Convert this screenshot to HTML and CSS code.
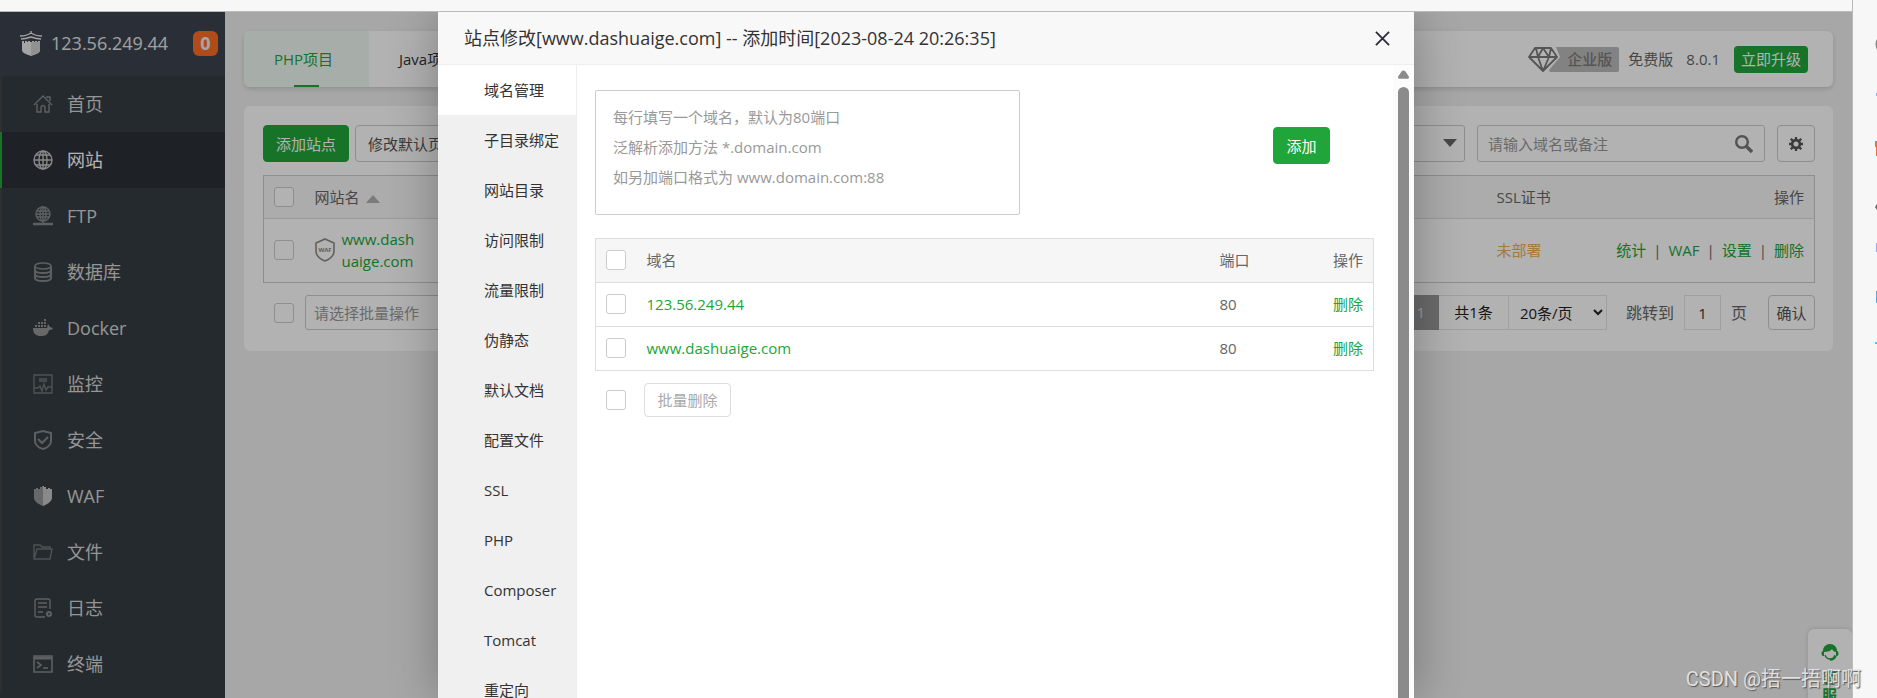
FILE: index.html
```html
<!DOCTYPE html>
<html lang="zh-CN">
<head>
<meta charset="utf-8">
<title>网站</title>
<link rel="stylesheet" href="styles.css">
</head>
<body>
<div class="browser">
  <div class="viewport">
    <div class="app">
      <aside class="sidebar">
        <div class="brand">
          <svg class="brand-logo" viewBox="0 0 24 26" aria-hidden="true"><path d="M3 11h2v2h1v-2h2v1h1v-1h2v1h2v-1h2v1h1v-1h2v2h1v-2h2v9c0 3-4 4-9 6-5-2-9-3-9-6z" fill="#ebebeb"/><path d="M12 12v14c5-2 9-3 9-6v-8z" fill="#d0d0d0"/><path d="M12 1v2M12 3C9 5 5 6 1 6M12 3c3 2 7 3 11 3M12 7C9 8 5 9 2 9M12 7c3 1 7 2 10 2" fill="none" stroke="#ebebeb" stroke-width="1.4"/></svg>
          <span class="brand-ip">123.56.249.44</span>
          <span class="brand-badge">0</span>
        </div>
        <nav class="menu">
          <a class="menu-item" href="#"><svg viewBox="0 0 20 20"><path d="M1 11l9-9 9 9M4 10v8h4v-5q2-3 4 0v5h4v-8M14 4V3h3v4"/></svg>首页</a>
          <a class="menu-item active" href="#"><svg viewBox="0 0 20 20"><circle cx="10" cy="10" r="9"/><ellipse cx="10" cy="10" rx="4" ry="9"/><path d="M10 1v18M1 10h18M3 5h14M3 15h14"/></svg>网站</a>
          <a class="menu-item" href="#"><svg viewBox="0 0 20 20"><circle cx="10" cy="8" r="7"/><ellipse cx="10" cy="8" rx="3" ry="7"/><path d="M3 8h14M4 5h12M4 11h12M10 1v16"/><path d="M0 18h20M7 18h6" stroke-width="2.4"/></svg>FTP</a>
          <a class="menu-item" href="#"><svg viewBox="0 0 20 20"><ellipse cx="10" cy="4" rx="8" ry="3"/><path d="M2 4v12c0 4 16 4 16 0V4M2 8c0 4 16 4 16 0M2 12c0 4 16 4 16 0" stroke-width="2"/></svg>数据库</a>
          <a class="menu-item" href="#"><svg viewBox="0 0 20 20" class="solid"><path d="M0 10h14c1-1 0-3 1-4l2 3 3 1c-1 2-3 2-4 2-1 5-4 6-8 6-5 0-8-2-8-8zM2 7h2v2H2zM5 7h2v2H5zM8 7h2v2H8zM11 7h2v2h-2zM5 4h2v2H5zM8 4h2v2H8zM11 4h2v2h-2zM11 1h2v2h-2z"/></svg>Docker</a>
          <a class="menu-item" href="#"><svg viewBox="0 0 20 20" class="faint"><path d="M1 1h18v18H1zM1 14h4l2-2 2 5 2-7 2 6 2-3h4M6 5h8M6 7h8"/></svg>监控</a>
          <a class="menu-item" href="#"><svg viewBox="0 0 20 20"><path d="M10 1l8 2v8c0 4-4 7-8 8-4-1-8-4-8-8V3zM5 9l4 4 6-6" stroke-width="2"/></svg>安全</a>
          <a class="menu-item" href="#"><svg viewBox="0 0 20 20" class="solid"><path d="M10 0v20c-5-2-9-5-9-8V3h2V2h2v1h2V1h2V0z"/><path class="bright" d="M10 0v20c5-2 9-5 9-8V3h-2V2h-2v1h-2V1h-2V0z"/></svg>WAF</a>
          <a class="menu-item" href="#"><svg viewBox="0 0 20 20" class="faint"><path d="M1 17V3h6l2 2h8v2M1 17L4 7h15l-2 10z"/></svg>文件</a>
          <a class="menu-item" href="#"><svg viewBox="0 0 20 20"><path d="M12 19H4q-2 0-2-2V3q0-2 2-2h11q2 0 2 2v8M5 5h9M5 9h9M5 14h5"/><circle cx="16" cy="16" r="2" stroke-width="2"/></svg>日志</a>
          <a class="menu-item" href="#"><svg viewBox="0 0 20 20"><path d="M1 2h18v16H1zM4 8l4 3-4 3M10 14h5" stroke-width="1.6"/><path d="M1 4h18" stroke-width="3"/></svg>终端</a>
        </nav>
      </aside>

      <main class="main">
        <section class="card tabs-card">
          <a class="tab current" href="#">PHP项目</a>
          <a class="tab" href="#">Java项目</a>
          <div class="license">
            <span class="edition">
              <svg class="gem" viewBox="0 0 34 25" aria-hidden="true"><path d="M28 0h6v25H22l-1-2 11-13z" fill="#bbb"/><path d="M7 1h16l6 9-14 14L1 10zM1 10h28M8 1l2 9 5 14 6-14 2-9M10 10l5-9 6 9" fill="none" stroke="#7a7a7a" stroke-width="1.8" stroke-linejoin="round"/></svg>
              <span class="edition-name">企业版</span>
            </span>
            <span>免费版</span>
            <span class="version">8.0.1</span>
            <button class="upgrade" type="button">立即升级</button>
          </div>
        </section>

        <section class="card sites">
          <div class="toolbar">
            <button class="btn primary" type="button">添加站点</button>
            <button class="btn" type="button">修改默认页</button>
            <div class="toolbar-right">
              <div class="category"><select aria-label="分类"><option></option></select><svg viewBox="0 0 14 8" aria-hidden="true"><path d="M0 0h14L7 8z"/></svg></div>
              <div class="search">
                <input type="text" placeholder="请输入域名或备注" aria-label="请输入域名或备注">
                <svg viewBox="0 0 18 18" aria-hidden="true"><circle cx="7" cy="7" r="5.8"/><path d="M11 11l6 6" stroke-width="3.4"/></svg>
              </div>
              <button class="btn gear" type="button" aria-label="设置"><svg viewBox="0 0 16 16"><circle cx="8" cy="8" r="4.4" fill="none" stroke="#555" stroke-width="3"/><path d="M8 0v3M8 13v3M0 8h3M13 8h3M2 2l3 3M11 11l3 3M14 2l-3 3M5 11l-3 3" stroke="#555" stroke-width="2.6"/></svg></button>
            </div>
          </div>

          <table class="grid site-grid">
            <colgroup><col class="c-check"><col class="c-name"><col><col class="c-ssl"><col class="c-ops"></colgroup>
            <thead>
              <tr><th><input type="checkbox" aria-label="全选"></th><th>网站名 <svg class="sort" viewBox="0 0 14 8" aria-hidden="true"><path d="M0 8h14L7 0z"/></svg></th><th></th><th>SSL证书</th><th class="right">操作</th></tr>
            </thead>
            <tbody>
              <tr>
                <td><input type="checkbox" aria-label="www.dashuaige.com"></td>
                <td><div class="site"><svg viewBox="0 0 20 24" aria-hidden="true"><path d="M10 1l9 4v8c0 5-4 8-9 10-5-2-9-5-9-10V5z" fill="none" stroke="#8a8a8a" stroke-width="1.6"/><text x="10" y="14" text-anchor="middle">WAF</text></svg><a href="#">www.dashuaige.com</a></div></td>
                <td></td>
                <td class="warn">未部署</td>
                <td class="right ops"><a href="#">统计</a><i>|</i><a href="#">WAF</a><i>|</i><a href="#">设置</a><i>|</i><a href="#">删除</a></td>
              </tr>
            </tbody>
          </table>

          <div class="footer">
            <input type="checkbox" aria-label="选择全部">
            <select class="batch" aria-label="批量操作"><option>请选择批量操作</option></select>
            <div class="pager">
              <span class="page-now">1</span><span class="page-total">共1条</span><select class="page-size" aria-label="每页条数"><option>20条/页</option></select>
              <label for="jump">跳转到</label><input id="jump" class="page-jump" type="text" value="1"><span class="page-unit">页</span>
              <button class="btn confirm" type="button">确认</button>
            </div>
          </div>
        </section>
      </main>
      <div class="service">
        <svg viewBox="0 0 18 17" aria-hidden="true"><path d="M2 7C2 3 5 0 9 0s7 3 7 7c2 0 2 5 0 5h-1V8c-2 0-3-1-4-3-1 2-4 3-8 3v4H2c-2 0-2-5 0-5z"/><path d="M4 11c1 3 3 4 5 4s4-1 5-4M15 12c-1 3-3 4-6 4" fill="none" stroke="#20a53a" stroke-width="1.3"/></svg>
        <span>客服</span>
      </div>
    </div>

    <div class="mask">
      <div class="dialog" role="dialog" aria-labelledby="dialog-title">
        <header class="dialog-head">
          <h1 id="dialog-title">站点修改[www.dashuaige.com] -- 添加时间[2023-08-24 20:26:35]</h1>
          <button class="close" type="button" aria-label="关闭"><svg viewBox="0 0 16 16"><path d="M1 1l14 14M15 1L1 15"/></svg></button>
        </header>
        <div class="dialog-body">
          <nav class="side-tabs">
            <a class="on" href="#">域名管理</a><a href="#">子目录绑定</a><a href="#">网站目录</a><a href="#">访问限制</a><a href="#">流量限制</a><a href="#">伪静态</a><a href="#">默认文档</a><a href="#">配置文件</a><a href="#">SSL</a><a href="#">PHP</a><a href="#">Composer</a><a href="#">Tomcat</a><a href="#">重定向</a>
          </nav>
          <div class="pane">
            <div class="add-domain">
              <textarea aria-label="域名" placeholder="每行填写一个域名，默认为80端口&#10;泛解析添加方法 *.domain.com&#10;如另加端口格式为 www.domain.com:88"></textarea>
              <button class="btn primary" type="button">添加</button>
            </div>
            <table class="grid domain-grid">
              <colgroup><col class="c-check"><col><col class="c-port"><col class="c-del"></colgroup>
              <thead><tr><th><input type="checkbox" aria-label="全选"></th><th>域名</th><th>端口</th><th class="right">操作</th></tr></thead>
              <tbody>
                <tr><td><input type="checkbox" aria-label="123.56.249.44"></td><td><a href="#">123.56.249.44</a></td><td>80</td><td class="right"><a href="#">删除</a></td></tr>
                <tr><td><input type="checkbox" aria-label="www.dashuaige.com"></td><td><a href="#">www.dashuaige.com</a></td><td>80</td><td class="right"><a href="#">删除</a></td></tr>
              </tbody>
            </table>
            <div class="batch-row"><input type="checkbox" aria-label="选择全部"><button class="btn batch-delete" type="button">批量删除</button></div>
          </div>
          <div class="scrollbar" aria-hidden="true"><svg viewBox="0 0 12 9"><path d="M6 0q1 0 2 1l4 6q0 2-1 2H1q-1 0-1-2l4-6q1-1 2-1z"/></svg><div class="thumb"></div></div>
        </div>
      </div>
    </div>
  </div>
  <div class="edge">
    <svg viewBox="0 0 2 165" aria-hidden="true"><path d="M2 0q-3 5 0 11z" fill="#888"/><path d="M1 54h1v3H1z" fill="#8bb4f0"/><path d="M0 102h2v15H1v-9H0z" fill="#e8703a"/></svg>
    <svg viewBox="0 0 2 165" aria-hidden="true"><path d="M2 0l-2 3 2 3z" fill="#666"/><path d="M1 39h1v9H1z" fill="#99a8e8"/><path d="M1 87h1v12H1z" fill="#5ba8e0"/><path d="M0 138h2v2H0z" fill="#4cc0f0"/></svg>
  </div>
</div>
<div class="watermark">CSDN @捂一捂啊啊</div>
</body>
</html>
```
FILE: styles.css
```css
* { box-sizing: border-box; }

body {
  margin: 0;
  height: 100vh;
  overflow: hidden;
  background: #f7f7f7;
  color: #666;
  font: 15px/22px "Open Sans", "Noto Sans CJK SC", sans-serif;
}

a { color: #20a53a; text-decoration: none; }
button, input, select, textarea { font: inherit; color: inherit; margin: 0; }

.browser { display: flex; height: 100vh; }

.viewport {
  position: relative;
  flex: 1;
  margin-top: 11px;
  border-top: 1px solid #bbb;
  overflow: hidden;
}

.edge {
  width: 25px;
  border-left: 1px solid #bbb;
  padding-top: 39px;
  display: flex;
  flex-direction: column;
  align-items: flex-end;
  overflow: hidden;
}
.edge svg { width: 2px; height: 165px; flex: none; }

.app { display: flex; height: 100%; background: #f0f0f0; }

/* sidebar */
.sidebar { width: 225px; flex: none; background: #363d42; overflow: hidden; }

.brand {
  display: flex;
  align-items: center;
  height: 64px;
  padding: 0 7px 2px 19px;
  background: #3d434e;
  color: #e6e6e6;
  font-size: 18px;
}
.brand-logo { width: 24px; height: 26px; margin-right: 8px; }
.brand-badge {
  margin-left: auto;
  width: 25px;
  height: 25px;
  border-radius: 6px;
  background: #fc6d26;
  color: #eee;
  font-weight: 700;
  line-height: 25px;
  text-align: center;
}

.menu-item {
  display: flex;
  align-items: center;
  gap: 14px;
  height: 56px;
  padding-left: 31px;
  border-left: 2px solid #444;
  color: #d6d6d6;
  font-size: 18px;
}
.menu-item svg {
  width: 20px;
  height: 20px;
  fill: none;
  stroke: #858a8d;
  stroke-width: 1.4;
}
.menu-item svg.faint { stroke: #70767a; }
.menu-item svg.solid { fill: #969696; stroke: none; }
.menu-item .bright { fill: #c4c4c4; }
.menu-item.active { background: #2c3138; border-color: #20a53a; color: #fff; }
.menu-item.active svg { stroke: #c4c4c4; }

/* main area */
.main { flex: 1; min-width: 0; padding: 19px; }

.card { background: #fff; border-radius: 6px; }

.tabs-card {
  display: flex;
  height: 56px;
  margin-bottom: 19px;
  box-shadow: 0 2px 5px rgba(0, 0, 0, .15);
  overflow: hidden;
}
.tab {
  position: relative;
  padding: 0 30px;
  color: #333;
  line-height: 56px;
}
.tab.current { width: 125px; background: #f0faf3; color: #20a53a; }
.tab.current::after {
  content: "";
  position: absolute;
  left: 50px;
  bottom: 0;
  width: 25px;
  height: 2px;
  background: #20a53a;
}

.license {
  display: flex;
  align-items: center;
  margin-left: auto;
  padding-right: 25px;
}
.edition { display: flex; margin-right: 9px; }
.gem { width: 34px; height: 25px; }
.edition-name {
  height: 25px;
  padding: 0 7px 0 5px;
  background: #bbb;
  border-radius: 0 2px 2px 0;
  font-weight: 500;
  line-height: 25px;
  color: #7a7a7a;
}
.version { margin: 0 14px 0 13px; }
.upgrade {
  height: 27px;
  padding: 0 7px;
  border: 0;
  border-radius: 4px;
  background: #20a53a;
  color: #fff;
  line-height: 27px;
}

.sites { padding: 19px 18px 21px 19px; }

.toolbar { display: flex; gap: 6px; margin-bottom: 13px; }
.toolbar-right { display: flex; gap: 12px; margin-left: auto; }

.btn {
  height: 37px;
  padding: 0 12px;
  border: 1px solid #ccc;
  border-radius: 4px;
  background: #fff;
  color: #555;
}
.btn.primary { border-color: #20a53a; background: #20a53a; color: #fff; }
.btn.gear { display: grid; place-items: center; width: 38px; padding: 0; }
.gear svg { width: 14px; height: 14px; }

.category { position: relative; }
.category select {
  width: 150px;
  height: 37px;
  border: 1px solid #ccc;
  border-radius: 3px;
  background: #fff;
  appearance: none;
}
.category svg {
  position: absolute;
  right: 8px;
  top: 14px;
  width: 14px;
  height: 8px;
  fill: #666;
}

.search {
  display: flex;
  align-items: center;
  width: 288px;
  height: 37px;
  padding: 0 11px 0 10px;
  border: 1px solid #ccc;
  border-radius: 3px;
}
.search input { flex: 1; min-width: 0; padding: 0; border: 0; background: none; outline: 0; }
.search input::placeholder { color: #999; }
.search svg { width: 18px; height: 18px; fill: none; stroke: #777; stroke-width: 2.4; }

input[type="checkbox"] {
  display: block;
  width: 20px;
  height: 20px;
  border: 1px solid #ccc;
  border-radius: 3px;
  background: #fff;
  appearance: none;
}

.grid {
  width: 100%;
  border: 1px solid #ddd;
  border-collapse: collapse;
  table-layout: fixed;
}
.grid th, .grid td { padding: 0 10px 1px; border-bottom: 1px solid #ddd; text-align: left; font-weight: 400; }
.grid th { background: #f6f6f6; }
.grid .right { text-align: right; }
.c-check { width: 41px; }

.site-grid { margin-bottom: 12px; border-color: #ccc; }
.site-grid th { height: 43px; }
.site-grid td { height: 64px; border-color: #ccc; }
.c-name { width: 150px; }
.c-ssl { width: 110px; }
.c-ops { width: 218px; }
.sort { width: 14px; height: 8px; margin-left: 3px; fill: #b0b0b0; }
.site { display: flex; align-items: center; gap: 7px; }
.site svg { width: 20px; height: 24px; }
.site text { font: 700 6px "Open Sans", sans-serif; fill: #8a8a8a; }
.site a { width: 76px; word-break: break-all; }
.warn { color: #f0ad4e; }
.ops { white-space: nowrap; }
.ops i { margin: 0 7px; font-style: normal; }

.footer { display: flex; align-items: center; height: 35px; padding-left: 11px; }
.batch {
  width: 150px;
  height: 35px;
  margin-left: 11px;
  padding: 0 8px;
  border: 1px solid #ccc;
  border-radius: 3px;
  background: #fff;
  color: #999;
  appearance: none;
}
.pager { display: flex; align-items: center; margin-left: auto; }
.page-now, .page-total, .page-size, .page-jump {
  height: 35px;
  border: 1px solid #e4e4e4;
  background: #fff;
  line-height: 33px;
}
.page-now { padding: 0 13px; background: #9a9a9a; border-color: #9a9a9a; color: #ddd; }
.page-total { width: 70px; border-left: 0; text-align: center; color: #222; }
.page-size { width: 98px; margin: 0 19px 0 0; border-left: 0; border-radius: 0; padding-left: 7px; color: #222; }
.page-jump { width: 37px; margin: 0 10px; text-align: center; color: #333; }
.pager label, .page-unit { font-size: 16px; }
.confirm { height: 35px; width: 47px; margin-left: 21px; padding: 0; }

.service {
  position: absolute;
  right: 0;
  top: 617px;
  display: flex;
  flex-direction: column;
  align-items: center;
  gap: 7px;
  width: 44px;
  height: 110px;
  padding: 15px 12px;
  border-radius: 6px;
  background: #fff;
  box-shadow: 0 0 5px rgba(0, 0, 0, .15);
  color: #20a53a;
  font-weight: 700;
  line-height: 18px;
}
.service svg { width: 18px; height: 17px; flex: none; fill: #20a53a; }
.service span { width: 16px; }

/* dialog */
.mask {
  position: absolute;
  inset: 0;
  display: flex;
  justify-content: center;
  background: rgba(0, 0, 0, .3);
}
.dialog {
  display: flex;
  flex-direction: column;
  width: 976px;
  max-width: 100%;
  background: #fff;
  border-radius: 2px;
  box-shadow: 1px 1px 50px rgba(0, 0, 0, .3);
}
.dialog-head {
  display: flex;
  align-items: center;
  justify-content: space-between;
  flex: none;
  height: 53px;
  padding: 0 24px 0 26px;
  border-bottom: 1px solid #eee;
  background: #f8f8f8;
}
.dialog-head h1 { margin: 0; color: #333; font-size: 18px; font-weight: 400; }
.close { display: flex; padding: 0; border: 0; background: none; }
.close svg { width: 15px; height: 15px; stroke: #2e2d3c; stroke-width: 2; }

.dialog-body { display: flex; flex: 1; min-height: 0; overflow: hidden; }

.side-tabs { width: 139px; flex: none; background: #f0f0f0; border-right: 1px solid #eee; }
.side-tabs a { display: block; height: 50px; padding-left: 46px; color: #333; line-height: 50px; }
.side-tabs .on { background: #fff; }

.pane { flex: 1; padding: 25px 19px 0 18px; }
.add-domain { display: flex; justify-content: space-between; margin-bottom: 23px; padding-right: 44px; }
.add-domain textarea {
  display: block;
  width: 425px;
  height: 125px;
  padding: 11px 17px;
  border: 1px solid #ccc;
  border-radius: 2px;
  line-height: 30px;
  resize: none;
}
.add-domain textarea::placeholder { color: #999; }
.add-domain .btn { width: 57px; margin-top: 37px; }

.domain-grid th, .domain-grid td { height: 44px; }
.c-port { width: 84px; }
.c-del { width: 80px; }

.batch-row { display: flex; align-items: center; gap: 18px; margin-top: 12px; padding-left: 11px; }
.batch-delete { height: 34px; width: 87px; border-color: #ddd; color: #aaa; }

.scrollbar {
  display: flex;
  flex-direction: column;
  align-items: center;
  gap: 8px;
  width: 21px;
  padding-top: 5px;
  background: #fcfcfc;
}
.scrollbar svg { width: 11px; height: 9px; fill: #8b8b8b; flex: none; }
.thumb { flex: 1; width: 11px; border-radius: 6px 6px 0 0; background: #8b8b8b; }

.watermark {
  position: absolute;
  right: 16px;
  bottom: 6px;
  color: #e0e0e0;
  font: 20px/26px Roboto, "Noto Sans CJK SC", sans-serif;
  text-shadow: 1px 1px 1px #555;
}
```
